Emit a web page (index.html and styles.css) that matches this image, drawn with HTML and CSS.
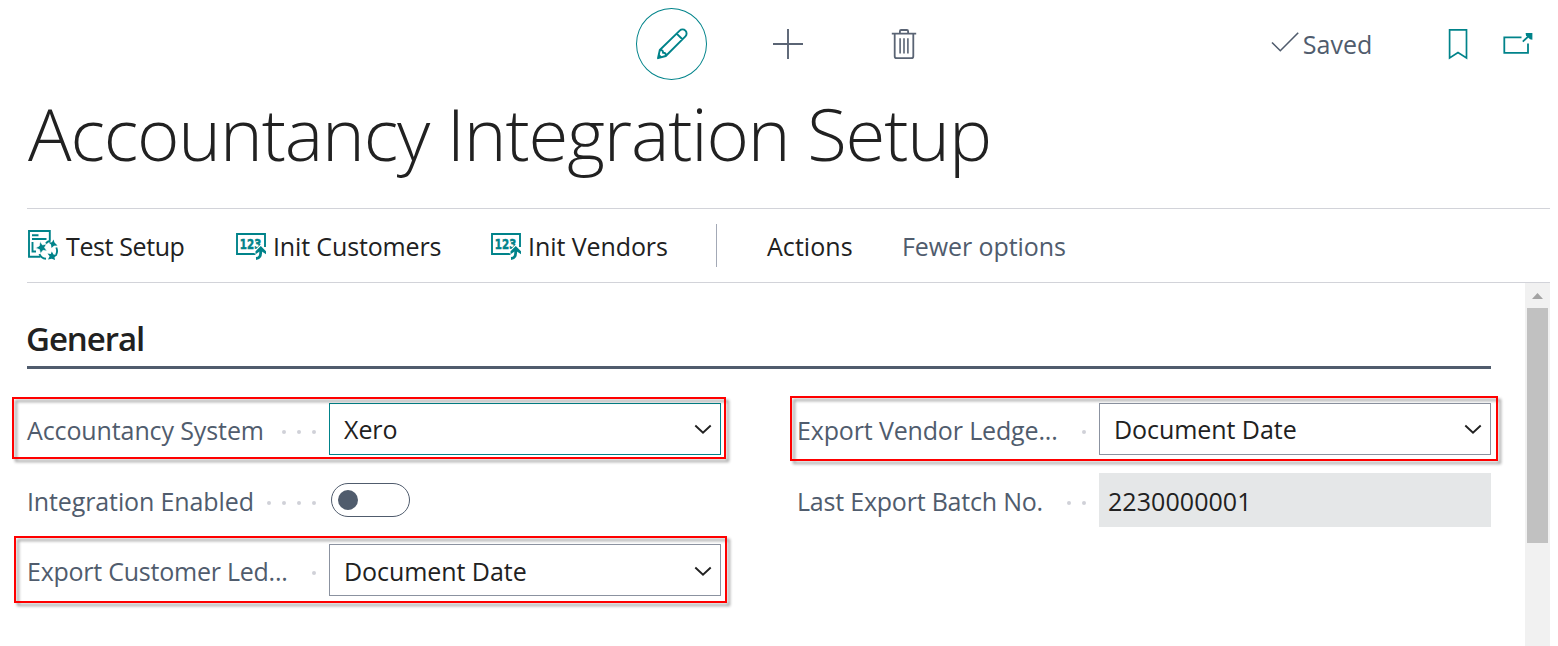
FILE: index.html
```html
<!DOCTYPE html>
<html lang="en">
<head>
<meta charset="utf-8">
<title>Accountancy Integration Setup</title>
<link rel="stylesheet" href="styles.css">
</head>
<body>
<header class="topbar">
  <div class="tools">
    <button class="edit" aria-label="Edit">
      <svg width="32" height="32" viewBox="0 0 32 32" fill="none" stroke="#00838a" stroke-width="1.900" stroke-linejoin="round"><path d="M2 30.200L3.800 22L23.700 2.600A3.950 3.950 0 0 1 29.400 8.300L9.800 28ZM20.600 5.600L26.400 11.200M3.800 22C6.500 22 7.200 22.700 7 24.800C9.200 24.700 10 25.600 9.800 28"/><path d="M2 30.200L3 25.800L6.400 29.200Z" fill="#00838a" stroke="none"/></svg>
    </button>
    <svg class="plus" width="32" height="32" viewBox="0 0 32 32" stroke="#5a6474" stroke-width="1.900"><path d="M1 16H31M16 1V31"/></svg>
    <svg width="26" height="32" viewBox="0 0 26 32" fill="none" stroke="#5a6474" stroke-width="1.800"><path d="M.8 5.700H25.200M8.900 5.500V3.200Q8.900 2 10.100 2H15.900Q17.100 2 17.100 3.200V5.500M3.700 5.800V28.200Q3.700 30.200 5.700 30.200H20.300Q22.300 30.200 22.300 28.200V5.800"/><path d="M9.100 10.200V25.500M13 10.200V25.500M16.900 10.200V25.500" stroke-width="1.600"/></svg>
  </div>
  <div class="status">
    <svg width="30" height="24" viewBox="0 0 30 24" fill="none" stroke="#505c6d" stroke-width="1.600"><path d="M2 11.500L10.300 19.700L28.200 1.800"/></svg>
    <span>Saved</span>
  </div>
  <div class="links">
    <svg width="20" height="32" viewBox="0 0 20 32" fill="none" stroke="#00838a" stroke-width="1.700"><path d="M1.600 1.900H18.500V30L10 24.600L1.600 30Z"/></svg>
    <svg width="32" height="24" viewBox="0 0 32 24" fill="none" stroke="#00838a" stroke-width="1.800"><path d="M19.500 5.400H2.300V20.800H26V11.500M20.800 9.600L28.300 2.500"/><path d="M23.600 1H30.400V7.800L28 7.300L24 3.500Z" fill="#00838a" stroke="none"/></svg>
  </div>
</header>

<h1 class="title">Accountancy Integration Setup</h1>

<nav class="actions">
  <a class="item test">
    <svg width="32" height="32" viewBox="0 0 32 32" fill="none" stroke="#00838a" stroke-width="1.900"><path d="M13.500 27.800H2V2H22.800V11.500M5 6.200H11.500M5 10H19.500M5.500 13V22.500H9"/><path d="M13.200 12.500L15.500 16L19.500 15L17.500 18.500L20 22L16 21.300L13.500 24.500L12.500 20.500L8.500 19L12.300 17Z" fill="#00838a" stroke="#fff" stroke-width=".6"/><path d="M19 14.500Q20.500 12 23.500 12M12.500 25Q14 29.300 19 29.800M29.300 18.500Q31 22.500 29 26" stroke-width="1.900"/><path d="M26.500 10.500L27.500 13.500L30.500 16.500L27 16.800L24.500 19L24 15.500L21.500 13.500L25 13.200ZM24.800 22.500L26.500 25.500L30.300 26L27.500 28.300L28 31L24.800 29.800L21 30.500L22.600 27.300L20.500 24.500L23.800 25Z" fill="#00838a" stroke="none"/></svg>
    <span>Test Setup</span>
  </a>
  <a class="item customers">
    <svg width="32" height="32" viewBox="0 0 32 32" fill="none"><path d="M20.500 25H2V5H30V18" stroke="#00838a" stroke-width="1.900"/><text x="4.800" y="20" textLength="21.500" lengthAdjust="spacingAndGlyphs" class="digits">123</text><path d="M20.500 29.500C24.500 29.500 25.800 27 25.800 18M19.800 24.500L25.800 18.500L31 24.500" stroke="#fff" stroke-width="4.500"/><path d="M21 29.500C25 29.300 25.800 27 25.800 21" stroke="#00838a" stroke-width="2.800"/><path d="M25.800 17L31 22.300V25.300L25.800 21.800L20.500 25.300V22.300Z" fill="#00838a"/></svg>
    <span>Init Customers</span>
  </a>
  <a class="item vendors">
    <svg width="32" height="32" viewBox="0 0 32 32" fill="none"><path d="M20.500 25H2V5H30V18" stroke="#00838a" stroke-width="1.900"/><text x="4.800" y="20" textLength="21.500" lengthAdjust="spacingAndGlyphs" class="digits">123</text><path d="M20.500 29.500C24.500 29.500 25.800 27 25.800 18M19.800 24.500L25.800 18.500L31 24.500" stroke="#fff" stroke-width="4.500"/><path d="M21 29.500C25 29.300 25.800 27 25.800 21" stroke="#00838a" stroke-width="2.800"/><path d="M25.800 17L31 22.300V25.300L25.800 21.800L20.500 25.300V22.300Z" fill="#00838a"/></svg>
    <span>Init Vendors</span>
  </a>
  <i class="divider"></i>
  <a class="menu">Actions</a>
  <a class="fewer">Fewer options</a>
</nav>

<main class="content">
  <section class="general">
    <h2>General</h2>
    <div class="columns">
      <div class="column">
        <div class="field">
          <label class="t1">Accountancy System</label><span class="dots"><i></i><i></i><i></i></span>
          <div class="select active"><span>Xero</span><svg width="18" height="12" viewBox="0 0 18 12"><path d="M1.300 2.500L9 9.700L16.700 2.500" fill="none" stroke="#212121" stroke-width="1.900"/></svg></div>
          <b class="mark mark-system"></b>
        </div>
        <div class="field tall">
          <label class="t2">Integration Enabled</label><span class="dots"><i></i><i></i><i></i><i></i></span>
          <div class="toggle"><i></i></div>
        </div>
        <div class="field">
          <label class="t3">Export Customer Led...</label><span class="dots"><i></i></span>
          <div class="select low"><span>Document Date</span><svg width="18" height="12" viewBox="0 0 18 12"><path d="M1.300 2.500L9 9.700L16.700 2.500" fill="none" stroke="#212121" stroke-width="1.900"/></svg></div>
          <b class="mark mark-customer"></b>
        </div>
      </div>
      <div class="column">
        <div class="field">
          <label class="t4">Export Vendor Ledge...</label><span class="dots"><i></i></span>
          <div class="select"><span>Document Date</span><svg width="18" height="12" viewBox="0 0 18 12"><path d="M1.300 2.500L9 9.700L16.700 2.500" fill="none" stroke="#212121" stroke-width="1.900"/></svg></div>
          <b class="mark mark-vendor"></b>
        </div>
        <div class="field tall">
          <label class="t5">Last Export Batch No.</label><span class="dots"><i></i><i></i></span>
          <div class="readonly">2230000001</div>
        </div>
      </div>
    </div>
  </section>
  <aside class="scrollbar">
    <svg width="25" height="25" viewBox="0 0 25 25"><path d="M7 16L12.500 10L18 16Z" fill="#a3a3a3"/></svg>
    <div class="thumb"></div>
  </aside>
</main>
</body>
</html>
```
FILE: styles.css
```css
* { box-sizing: border-box; }

body {
  margin: 0;
  width: 1558px;
  height: 646px;
  overflow: hidden;
  display: flex;
  flex-direction: column;
  background: #fff;
  color: #212121;
  font: 25px/36px "Open Sans", "Noto Sans", sans-serif;
  white-space: nowrap;
}

svg { display: block; flex: none; }
.digits { font: bold 13.5px "DejaVu Sans", sans-serif; letter-spacing: 0; fill: #00838a; stroke: #00838a; stroke-width: .5px; }

/* Top bar */
.topbar { display: flex; height: 88px; flex: none; align-items: center; padding: 0 24px 0 636px; }
.tools { display: flex; align-items: center; width: 635px; }
.edit {
  display: flex; align-items: center; justify-content: center;
  width: 71px; height: 72px; padding: 0;
  border: 1px solid #00838a; border-radius: 50%; background: none;
}
.plus { margin: 0 86.5px 0 65px; }
.status { display: flex; align-items: center; gap: 3px; color: #505c6d; width: 178.5px; }
.status svg { margin-top: -3px; }
.status span { margin-top: -1px; }
.links { display: flex; align-items: center; gap: 34px; }

.title {
  margin: 0;
  padding: 1px 0 0 28px;
  height: 120px;
  flex: none;
  font-size: 72.5px;
  font-weight: 300;
  line-height: 89px;
  letter-spacing: -1.15px;
}

/* Action bar */
.actions {
  display: flex; align-items: center; flex: none;
  height: 75px; width: 1523px; margin-left: 27px;
  border-top: 1px solid #d2d3d9; border-bottom: 1px solid #d2d3d9;
}
.item { display: flex; align-items: center; gap: 7px; }
.item svg { margin-top: -2px; }
.test { width: 208px; letter-spacing: -.39px; }
.customers { width: 255px; gap: 6px; letter-spacing: -.14px; }
.vendors { width: 226px; gap: 6px; letter-spacing: -.08px; }
.divider { width: 1px; height: 43px; background: #a3a9b6; }
.menu { width: 185px; padding-left: 50px; letter-spacing: .05px; }
.fewer { color: #505c6d; letter-spacing: -.08px; }

/* Page content */
.content { display: flex; flex: 1; justify-content: space-between; padding: 0 8px 0 27px; }
.general { width: 1464px; }
h2 {
  margin: 0; height: 86px; padding-top: 35px; text-indent: -1px;
  border-bottom: 3px solid #505c6d;
  font-size: 33px; font-weight: 600; line-height: 42px; letter-spacing: -1.05px;
}
.columns { display: flex; gap: 76px; padding-top: 34px; }
.column { width: 694px; display: flex; flex-direction: column; gap: 17.5px; }
.field { position: relative; display: flex; align-items: center; height: 52px; }
.tall { height: 54px; }
label { color: #505c6d; padding-top: 2px; }
.tall label { padding-top: 3px; }
.t1 { letter-spacing: -.11px; }
.t2 { letter-spacing: -.12px; }
.t3 { letter-spacing: -.24px; }
.t4 { letter-spacing: -.15px; }
.t5 { letter-spacing: -.21px; }
.dots { flex: 1; display: flex; justify-content: flex-end; gap: 11px; padding: 6px 13px 0 0; }
.dots i { width: 4px; height: 4px; border-radius: 50%; background: #d0d1d8; }
.select {
  display: flex; align-items: center; justify-content: space-between;
  width: 392px; height: 52px; padding: 0 8px 0 14px;
  border: 1px solid #8b92a0; letter-spacing: -.06px;
}
.select.active { border-color: #00838a; }
.select.low { padding-top: 2px; }
.readonly { width: 392px; height: 54px; padding: 10px 0 0 9px; background: #e5e7e8; letter-spacing: .06px; }
.toggle {
  display: flex; align-items: center;
  width: 79px; height: 34px; margin: 0 311px 0 2px; padding-left: 6px;
  border: 1px solid #505c6d; border-radius: 17px;
}
.toggle i { width: 20px; height: 20px; border-radius: 50%; background: #505c6d; }

/* Red call-outs laid over the highlighted fields */
.mark { position: absolute; border: 2px solid #f00; filter: drop-shadow(3px 3px 1.5px rgba(0, 0, 0, .4)); }
.mark-system { left: -15px; top: -6px; width: 714px; height: 62px; }
.mark-customer { left: -13px; top: -8px; width: 713px; height: 67px; }
.mark-vendor { left: -7px; top: -7px; width: 708px; height: 65px; }

.scrollbar { width: 25px; background: #f1f1f1; }
.thumb { width: 21px; height: 235px; margin: 0 2px; background: #c1c1c1; }
```
